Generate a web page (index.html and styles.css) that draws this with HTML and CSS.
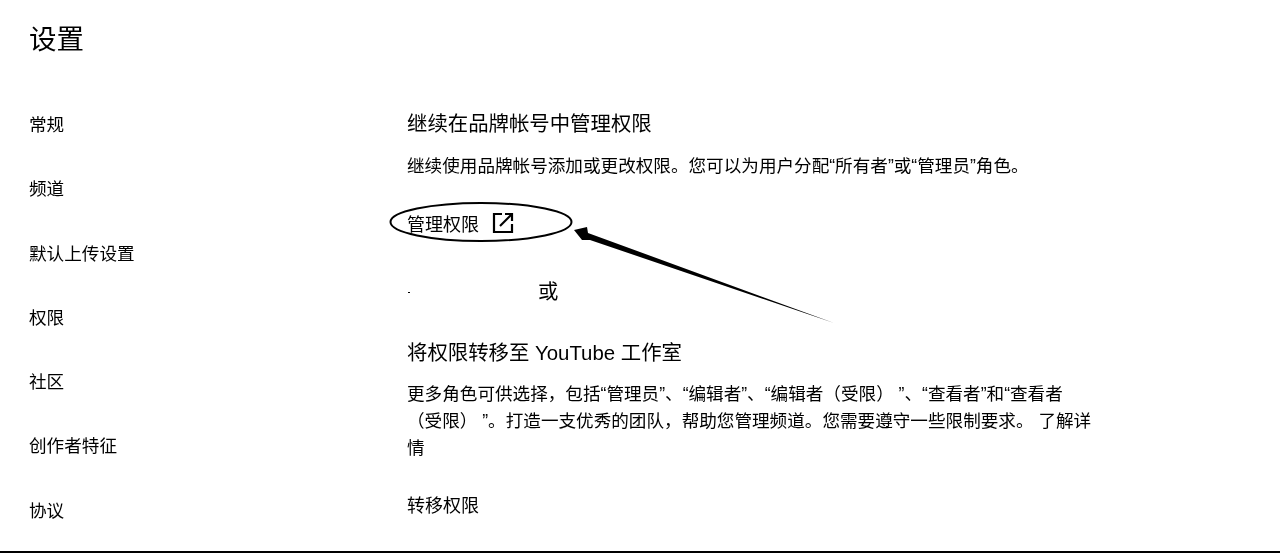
FILE: index.html
```html
<!DOCTYPE html>
<html lang="zh-CN">
<head>
  <meta charset="utf-8">
  <title>设置</title>
  <link rel="stylesheet" href="styles.css">
</head>

<body>
  <div class="page">
    <h1 class="title">设置</h1>

    <div class="layout">
      <nav class="nav">
        <a>常规</a>
        <a>频道</a>
        <a>默认上传设置</a>
        <a>权限</a>
        <a>社区</a>
        <a>创作者特征</a>
        <a>协议</a>
      </nav>

      <main class="content">
        <h2 class="heading">继续在品牌帐号中管理权限</h2>
        <p class="desc">继续使用品牌帐号添加或更改权限。您可以为用户分配“所有者”或“管理员”角色。</p>

        <a class="manage-link">
          管理权限
          <svg class="open-icon" viewBox="0 0 24 24" width="24" height="24" fill="none" stroke="#000" stroke-width="2.2">
            <path d="M11 3H3v18h18v-8"/>
            <path d="M9 15 20 4"/>
            <path d="M14 3h7v7"/>
          </svg>
        </a>

        <div class="or">或</div>

        <h2 class="heading">将权限转移至 YouTube 工作室</h2>
        <p class="desc desc-long">更多角色可供选择，包括“管理员”、“编辑者”、“编辑者（受限） ”、“查看者”和“查看者（受限） ”。打造一支优秀的团队，帮助您管理频道。您需要遵守一些限制要求。 了解详情</p>

        <a class="transfer-link">转移权限</a>
      </main>
    </div>
  </div>

  <!-- hand drawn annotation over the page -->
  <svg class="annotation" viewBox="0 0 1280 553" width="1280" height="553">
    <ellipse cx="481" cy="222" rx="90.5" ry="19" fill="none" stroke="#000" stroke-width="2"/>
    <path d="M574 230 L587 227 L588 233 L834 323 L590 240 L582 240 Z" fill="#000"/>
    <rect x="408" y="292" width="2" height="1" fill="#000"/>
  </svg>
</body>

</html>
```

FILE: styles.css
```css
:root {
  --text-color: #000;
  --font: "Liberation Sans", "Noto Sans CJK SC", sans-serif;
}

body {
  margin: 0;
  background: #fff;
  color: var(--text-color);
  font-family: var(--font);
  font-size: 17.6px;
  overflow: hidden;
  /* the reference is a hard black and white scan */
  filter: grayscale(1) brightness(0.65) contrast(8);
}

.page {
  height: 551px;
  border-bottom: 2px solid #000;
  padding-left: 29px;
  overflow: hidden;
}

.title {
  margin: 0;
  padding-top: 20px;
  font-size: 27.5px;
  font-weight: 400;
  line-height: 40px;
}

.layout {
  display: flex;
  margin-top: 50px;
}

.nav {
  width: 378px;
  padding-top: 2px;
  display: flex;
  flex-direction: column;
  gap: 38.3px;
}

.nav a {
  line-height: 26px;
}

.content {
  width: 686px;
}

.heading {
  margin: 0;
  font-size: 20.4px;
  font-weight: 400;
  line-height: 28px;
}

.desc {
  margin: 15px 0 0;
  line-height: 27px;
}

.manage-link {
  display: flex;
  align-items: center;
  gap: 12px;
  margin-top: 29px;
  height: 28px;
  font-size: 18px;
}

.or {
  margin: 41px 0 0 131px;
  font-size: 20.4px;
  line-height: 28px;
}

.or + .heading {
  margin-top: 33px;
}

.desc-long {
  margin-top: 14px;
}

.transfer-link {
  display: block;
  margin-top: 31px;
  font-size: 18px;
  line-height: 26px;
}

.annotation {
  position: absolute;
  left: 0;
  top: 0;
  pointer-events: none;
}
```
